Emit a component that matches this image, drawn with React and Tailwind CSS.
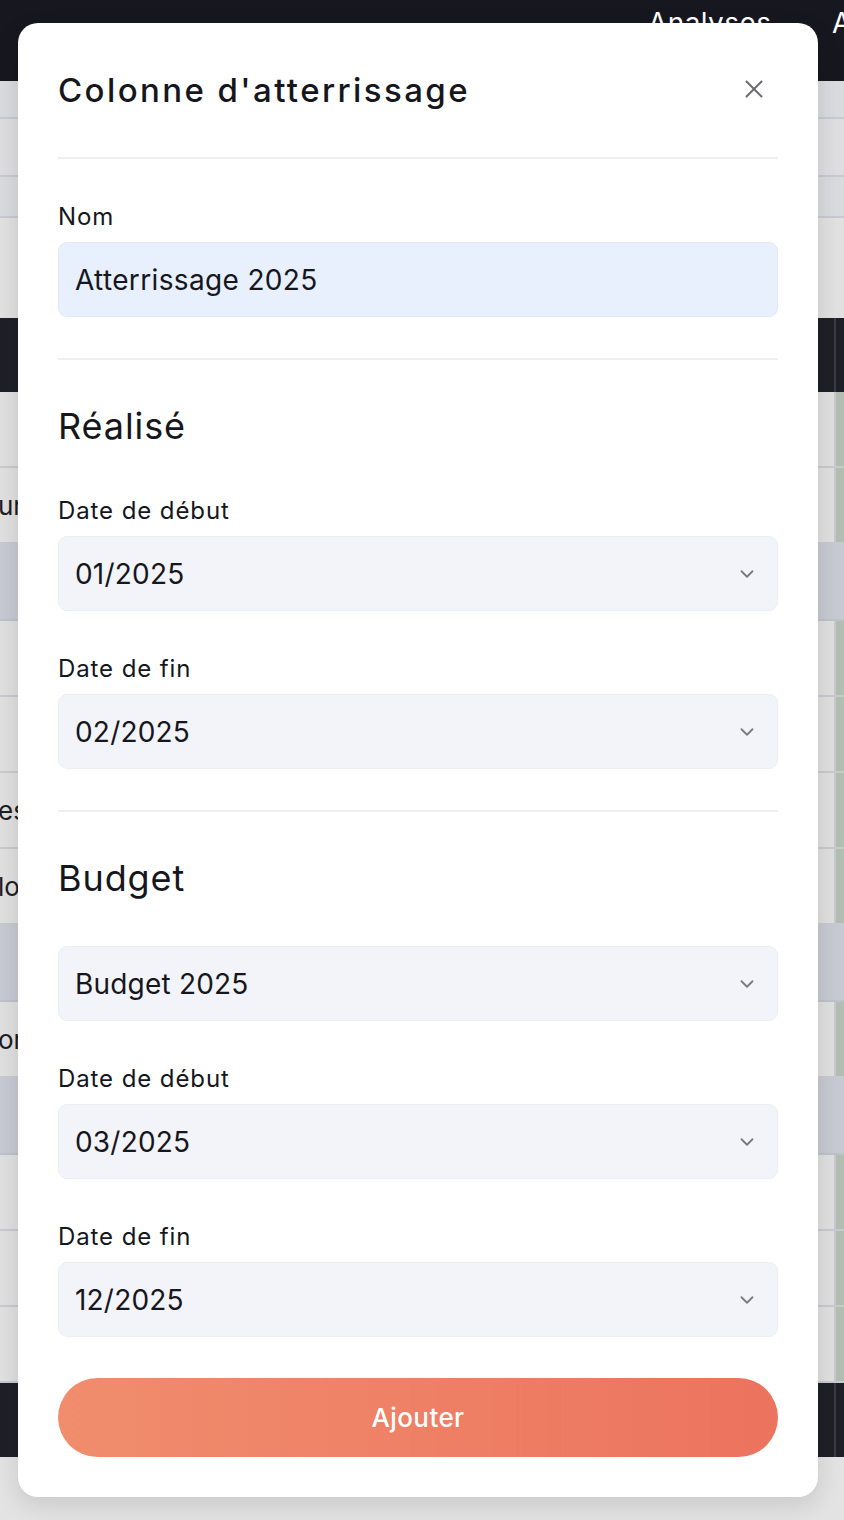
import { X, ChevronDown } from 'lucide-react';

const font = { fontFamily: 'Inter, "Noto Sans", sans-serif' };

function Row({ kind = 'normal', label }) {
  if (kind === 'dark') {
    return <div className="h-[74px] bg-[#1f2027] flex"><div className="flex-1" /><div className="w-[2px] bg-[#3a3b42]" /><div className="w-[8px]" /></div>;
  }
  if (kind === 'hl') {
    return <div className="h-[77px] bg-[#c7cad2] border-b-2 border-[#bfc2ca]" />;
  }
  return (
    <div className="h-[76px] flex border-b-2 border-[#c9cacf]">
      <div className="flex-1 bg-[#e0e0e1] flex items-center text-[26px] text-[#1d1d22] -ml-[2px]">{label}</div>
      <div className="w-[2px] bg-[#c9cacf]" />
      <div className="w-[8px] bg-[#b3beb3]" />
    </div>
  );
}

function Background() {
  return (
    <div className="absolute inset-0 overflow-hidden bg-[#e3e3e4]">
      <div className="h-[81px] bg-[#17171f] relative">
        <span className="absolute left-[648px] top-[2px] text-[28px] tracking-[0.4px] text-white">Analyses</span>
        <span className="absolute left-[832px] top-[2px] text-[28px] text-white">Admin</span>
      </div>
      <div className="h-[38px] bg-[#dadbde] border-b-2 border-[#c9cacf]" />
      <div className="h-[58px] bg-[#dedee0] border-b-2 border-[#c9cacf]" />
      <div className="h-[41px] bg-[#dadbde] border-b-2 border-[#c9cacf]" />
      <div className="h-[100px] bg-[#e1e1e2]" />
      <Row kind="dark" />
      <Row />
      <Row label="urs" />
      <Row kind="hl" />
      <Row />
      <Row />
      <Row label="esse" />
      <Row label="lois" />
      <Row kind="hl" />
      <Row label="ord" />
      <Row kind="hl" />
      <Row />
      <Row />
      <Row />
      <Row kind="dark" />
    </div>
  );
}

function Label({ children }) {
  return <div className="text-[24px] leading-[30px] tracking-[0.9px] text-[#16161d] mb-[10px]">{children}</div>;
}

function Select({ value }) {
  return (
    <div className="h-[75px] rounded-[9px] bg-[#f3f4f9] border border-[#eceef3] flex items-center justify-between pl-[16px] pr-[19px]">
      <span className="text-[28px] tracking-[0.2px] text-[#16161d]">{value}</span>
      <ChevronDown size={22} strokeWidth={2} className="text-[#7a7a80]" />
    </div>
  );
}

function Field({ label, value, mt = 'mt-[43px]' }) {
  return (
    <div className={mt}>
      <Label>{label}</Label>
      <Select value={value} />
    </div>
  );
}

export default function App() {
  return (
    <div className="relative w-[844px] h-[1520px] overflow-hidden" style={font}>
      <Background />
      <div className="absolute left-[18px] top-[23px] w-[800px] bg-white rounded-[20px] shadow-[0_8px_24px_rgba(0,0,0,0.12)] px-[40px] pt-[46px] pb-[40px]">
        <div className="flex items-center justify-between h-[44px]">
          <h2 className="text-[33px] font-medium tracking-[2.4px] text-[#16161d]">Colonne d'atterrissage</h2>
          <X size={30} strokeWidth={1.6} className="text-[#6b6b70] mr-[9px] -mt-[4px]" />
        </div>
        <div className="h-[2px] bg-[#efeff2] mt-[44px]" />

        <div className="mt-[43px]">
          <Label>Nom</Label>
          <div className="h-[75px] rounded-[9px] bg-[#e8f0fd] border border-[#e2e9f6] flex items-center pl-[16px]">
            <span className="text-[28px] tracking-[0.35px] text-[#16161d]">Atterrissage 2025</span>
          </div>
        </div>
        <div className="h-[2px] bg-[#efeff2] mt-[41px]" />

        <h3 className="mt-[44px] text-[36px] leading-[44px] tracking-[0.9px] text-[#16161d]">Réalisé</h3>
        <Field label="Date de début" value="01/2025" mt="mt-[48px]" />
        <Field label="Date de fin" value="02/2025" />
        <div className="h-[2px] bg-[#efeff2] mt-[41px]" />

        <h3 className="mt-[44px] text-[36px] leading-[44px] tracking-[0.9px] text-[#16161d]">Budget</h3>
        <div className="mt-[46px]"><Select value="Budget 2025" /></div>
        <Field label="Date de début" value="03/2025" />
        <Field label="Date de fin" value="12/2025" />

        <button className="mt-[41px] w-full h-[79px] rounded-full bg-gradient-to-r from-[#f08d6d] to-[#ec735e] text-white text-[26px] font-medium tracking-[0.4px]">
          Ajouter
        </button>
      </div>
    </div>
  );
}
